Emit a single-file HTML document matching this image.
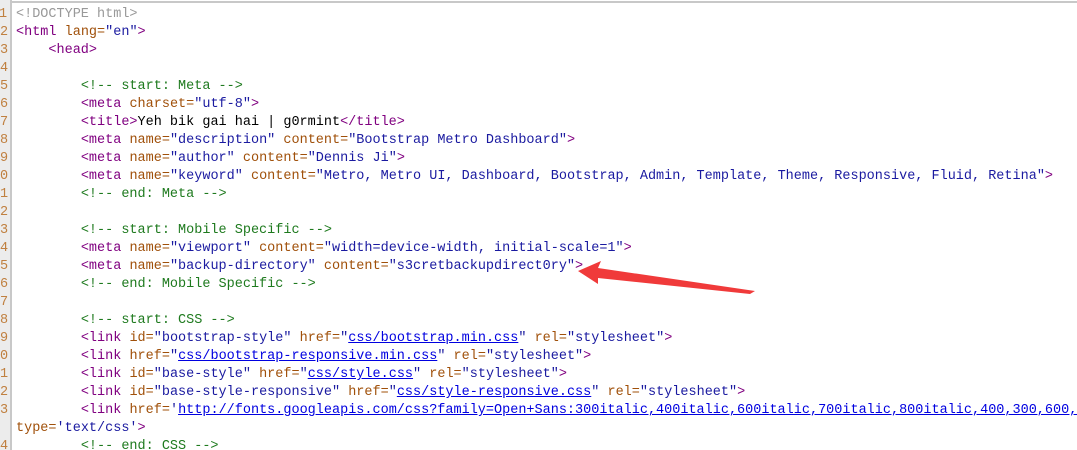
<!DOCTYPE html>
<html><head><meta charset="utf-8"><style>
html,body{margin:0;padding:0;background:#fff;width:1077px;height:450px;overflow:hidden;position:relative}
.g{position:absolute;left:0;top:0;width:10px;height:450px;background:#ececec;border-right:2px solid #c8c8c8}
.top{position:absolute;left:0;top:1px;width:1077px;height:2px;background:#c8c8c8}
.n{position:absolute;left:0;top:6px;font:13.5px/18px "Liberation Mono",monospace;color:#c08040;white-space:pre;width:10px;overflow:hidden;text-indent:-1px}
.c{position:absolute;left:16px;top:6px;font:13.5px/18px "Liberation Mono",monospace;white-space:pre;color:#000}
.t{color:#800080}.a{color:#a0500a}.v{color:#1a1aa0}.m{color:#1e7a1e}.d{color:#999}
.u{color:#0000e0;text-decoration:underline}
svg{position:absolute;left:0;top:0}
</style></head><body>
<div class="top"></div>
<div class="g"></div>
<div class="n">1
2
3
4
5
6
7
8
9
0
1
2
3
4
5
6
7
8
9
0
1
2
3

4</div>
<div class="c"><span class="d">&lt;!DOCTYPE html&gt;</span>
<span class="t">&lt;html</span> <span class="a">lang=</span><span class="v">"en"</span><span class="t">&gt;</span>
    <span class="t">&lt;head&gt;</span>

        <span class="m">&lt;!-- start: Meta --&gt;</span>
        <span class="t">&lt;meta</span> <span class="a">charset=</span><span class="v">"utf-8"</span><span class="t">&gt;</span>
        <span class="t">&lt;title&gt;</span>Yeh bik gai hai | g0rmint<span class="t">&lt;/title&gt;</span>
        <span class="t">&lt;meta</span> <span class="a">name=</span><span class="v">"description"</span> <span class="a">content=</span><span class="v">"Bootstrap Metro Dashboard"</span><span class="t">&gt;</span>
        <span class="t">&lt;meta</span> <span class="a">name=</span><span class="v">"author"</span> <span class="a">content=</span><span class="v">"Dennis Ji"</span><span class="t">&gt;</span>
        <span class="t">&lt;meta</span> <span class="a">name=</span><span class="v">"keyword"</span> <span class="a">content=</span><span class="v">"Metro, Metro UI, Dashboard, Bootstrap, Admin, Template, Theme, Responsive, Fluid, Retina"</span><span class="t">&gt;</span>
        <span class="m">&lt;!-- end: Meta --&gt;</span>

        <span class="m">&lt;!-- start: Mobile Specific --&gt;</span>
        <span class="t">&lt;meta</span> <span class="a">name=</span><span class="v">"viewport"</span> <span class="a">content=</span><span class="v">"width=device-width, initial-scale=1"</span><span class="t">&gt;</span>
        <span class="t">&lt;meta</span> <span class="a">name=</span><span class="v">"backup-directory"</span> <span class="a">content=</span><span class="v">"s3cretbackupdirect0ry"</span><span class="t">&gt;</span>
        <span class="m">&lt;!-- end: Mobile Specific --&gt;</span>

        <span class="m">&lt;!-- start: CSS --&gt;</span>
        <span class="t">&lt;link</span> <span class="a">id=</span><span class="v">"bootstrap-style"</span> <span class="a">href=</span><span class="v">"</span><span class="u">css/bootstrap.min.css</span><span class="v">"</span> <span class="a">rel=</span><span class="v">"stylesheet"</span><span class="t">&gt;</span>
        <span class="t">&lt;link</span> <span class="a">href=</span><span class="v">"</span><span class="u">css/bootstrap-responsive.min.css</span><span class="v">"</span> <span class="a">rel=</span><span class="v">"stylesheet"</span><span class="t">&gt;</span>
        <span class="t">&lt;link</span> <span class="a">id=</span><span class="v">"base-style"</span> <span class="a">href=</span><span class="v">"</span><span class="u">css/style.css</span><span class="v">"</span> <span class="a">rel=</span><span class="v">"stylesheet"</span><span class="t">&gt;</span>
        <span class="t">&lt;link</span> <span class="a">id=</span><span class="v">"base-style-responsive"</span> <span class="a">href=</span><span class="v">"</span><span class="u">css/style-responsive.css</span><span class="v">"</span> <span class="a">rel=</span><span class="v">"stylesheet"</span><span class="t">&gt;</span>
        <span class="t">&lt;link</span> <span class="a">href=</span><span class="v">'</span><span class="u">http://fonts.googleapis.com/css?family=Open+Sans:300italic,400italic,600italic,700italic,800italic,400,300,600,</span>
<span class="a">type=</span><span class="v">'text/css'</span><span class="t">&gt;</span>
        <span class="m">&lt;!-- end: CSS --&gt;</span></div>
<svg width="1077" height="450"><polygon points="578,271 601,261 598,268 755,291 750,294 598,278 598,284" fill="#f03a3a"/></svg>
</body></html>
